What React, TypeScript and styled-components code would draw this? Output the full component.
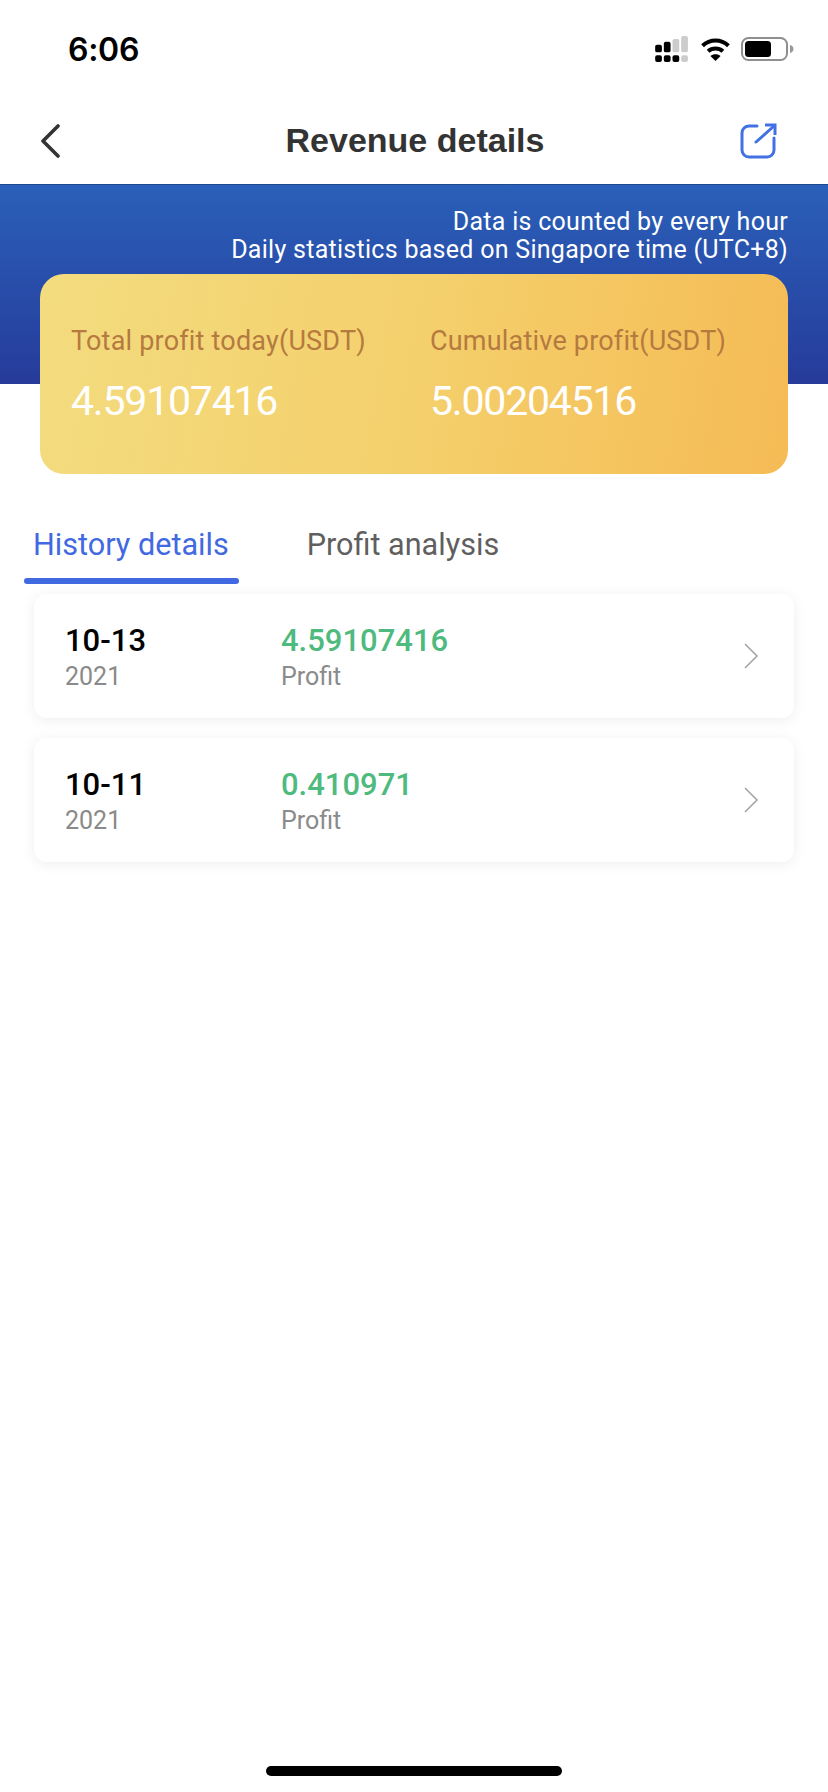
// App.tsx

import React, { FunctionComponent } from 'react';
import styled, { createGlobalStyle } from 'styled-components';

const GlobalStyle = createGlobalStyle`
  html, body {
    margin: 0;
    padding: 0;
    background: #fff;
  }
  * {
    box-sizing: border-box;
  }
`;

const Page = styled.div`
  position: relative;
  width: 828px;
  height: 1792px;
  overflow: hidden;
  background: #fff;
  font-family: Roboto, 'Liberation Sans', sans-serif;
`;

const StatusBar = styled.div`
  display: flex;
  align-items: center;
  justify-content: space-between;
  height: 100px;
  padding: 0 34px 2px 68px;
`;

const Clock = styled.span`
  font-family: Inter, sans-serif;
  font-size: 32px;
  font-weight: 600;
  letter-spacing: -0.3px;
  color: #000;
`;

const StatusIcons = styled.div`
  display: flex;
  align-items: center;
  gap: 10px;
`;

const NavBar = styled.div`
  display: grid;
  grid-template-columns: 1fr auto 1fr;
  align-items: center;
  height: 84px;
  padding: 0 51px 2px 40px;
`;

const NavAction = styled.div<{ end?: boolean }>`
  display: flex;
  justify-content: ${props => (props.end ? 'flex-end' : 'flex-start')};
`;

const NavTitle = styled.h1`
  margin: 0 0 2px 13px;
  font-family: 'Liberation Sans', sans-serif;
  font-size: 34px;
  font-weight: 700;
  color: #333;
`;

const Hero = styled.section`
  padding: 24px 40px 0;
  background: linear-gradient(180deg, #2a60b9 0%, #263b9a 100%) top / 100% 200px no-repeat;
  box-shadow: inset 0 1px 0 #1d4a8e;
`;

const HeroNote = styled.div`
  font-size: 25px;
  line-height: 28px;
  letter-spacing: 0.28px;
  color: #fff;
  text-align: right;
`;

const SummaryCard = styled.div`
  display: grid;
  grid-template-columns: 359px 1fr;
  height: 200px;
  margin-top: 10px;
  padding: 52px 31px 0;
  border-radius: 24px;
  background: linear-gradient(100deg, #f3dc7f 0%, #f4d06c 50%, #f5bb55 100%);
`;

const SummaryLabel = styled.div`
  font-size: 27px;
  line-height: 30px;
  letter-spacing: 0.2px;
  color: #b57a40;
  white-space: nowrap;
`;

const SummaryValue = styled.div`
  margin-top: 21px;
  font-size: 41px;
  line-height: 48px;
  letter-spacing: -1.2px;
  color: #fff;
`;

const Tabs = styled.div`
  display: flex;
  gap: 59px;
  margin: 50px 0 0 24px;
`;

const Tab = styled.div<{ active?: boolean }>`
  position: relative;
  padding: 0 10px 0 9px;
  height: 60px;
  font-size: 30.6px;
  line-height: 42px;
  color: ${props => (props.active ? '#4169e1' : '#5f5f5f')};

  &::after {
    content: '';
    display: ${props => (props.active ? 'block' : 'none')};
    position: absolute;
    left: 0;
    right: 0;
    bottom: 0;
    height: 6px;
    border-radius: 3px;
    background: #4169e1;
  }
`;

const HistoryList = styled.div`
  display: flex;
  flex-direction: column;
  gap: 20px;
  margin: 10px 34px 0;
`;

const HistoryRow = styled.div`
  display: grid;
  grid-template-columns: 216px 1fr 51px;
  align-items: center;
  height: 124px;
  padding-left: 31px;
  border-radius: 12px;
  background: #fff;
  box-shadow: 0 2px 14px rgba(0, 0, 0, 0.07);
`;

const RowCell = styled.div`
  padding-top: 3px;
`;

const RowMain = styled.div<{ tone: 'date' | 'profit' }>`
  font-size: 31px;
  line-height: 36px;
  font-weight: 500;
  color: ${props => (props.tone === 'profit' ? '#4fba7e' : '#000')};
`;

const RowSub = styled.div`
  margin-top: 3px;
  font-size: 25px;
  line-height: 30px;
  color: #8a8a8a;
`;

const HomeIndicator = styled.div`
  position: absolute;
  left: 266px;
  bottom: 16px;
  width: 296px;
  height: 10px;
  border-radius: 5px;
  background: #000;
`;

const SignalIcon = () => (
  <svg width="35" height="26" viewBox="0 0 36 27">
    <rect x="0" y="9" width="7" height="8" rx="2" fill="#000" />
    <rect x="9" y="6" width="7" height="11" rx="2" fill="#000" />
    <rect x="18" y="3" width="7" height="14" rx="2" fill="#ccc" />
    <rect x="27" y="0" width="7" height="17" rx="2" fill="#ccc" />
    <rect x="0" y="20" width="7" height="7" rx="2" fill="#000" />
    <rect x="9" y="20" width="7" height="7" rx="2" fill="#000" />
    <rect x="18" y="20" width="7" height="7" rx="2" fill="#000" />
    <rect x="27" y="20" width="7" height="7" rx="2" fill="#ccc" />
  </svg>
);

const WifiIcon = () => (
  <svg width="31" height="24" viewBox="0 0 32 26" fill="none" stroke="#000" strokeWidth="4.4">
    <path d="M2 9.5C10 2 22 2 30 9.5" />
    <path d="M8 15.5C12.5 11.5 19.5 11.5 24 15.5" />
    <path d="M16 26l-5.5-5.5C13.5 18 18.5 18 21.5 20.5z" fill="#000" stroke="none" />
  </svg>
);

const BatteryIcon = () => (
  <svg width="53" height="24" viewBox="0 0 53 24">
    <rect x="1" y="1" width="45" height="22" rx="6.5" fill="none" stroke="#8f8f8f" strokeWidth="2" />
    <rect x="4" y="4" width="26" height="16" rx="3.500" fill="#000" />
    <path d="M49 8c2 .6 3.500 2 3.500 4s-1.500 3.400-3.500 4z" fill="#999" />
  </svg>
);

const BackIcon = () => (
  <svg width="20" height="34" viewBox="0 0 20 34" fill="none">
    <path d="M18 2L3 17l15 15" stroke="#333" strokeWidth="3.600" strokeLinecap="round" strokeLinejoin="round" />
  </svg>
);

const ShareIcon = () => (
  <svg width="37" height="36" viewBox="0 0 37 36" fill="none" stroke="#4271e4" strokeWidth="3" strokeLinecap="round">
    <path d="M17 3H9a7 7 0 0 0-7 7v17a7 7 0 0 0 7 7h18a7 7 0 0 0 7-7V15" />
    <path d="M16 19L34 3" />
    <path d="M25 2h10v10" strokeLinecap="butt" />
  </svg>
);

const ChevronIcon = () => (
  <svg width="16" height="26" viewBox="0 0 16 26" fill="none">
    <path d="M2 1l12 12L2 25" stroke="#a6a6a6" strokeWidth="1.600" />
  </svg>
);

const history = [
  { date: '10-13', year: '2021', profit: '4.59107416' },
  { date: '10-11', year: '2021', profit: '0.410971' },
];

const App: FunctionComponent = () => {
  return (
    <Page>
      <GlobalStyle />
      <StatusBar>
        <Clock>6:06</Clock>
        <StatusIcons>
          <SignalIcon />
          <WifiIcon />
          <BatteryIcon />
        </StatusIcons>
      </StatusBar>
      <NavBar>
        <NavAction>
          <BackIcon />
        </NavAction>
        <NavTitle>Revenue details</NavTitle>
        <NavAction end>
          <ShareIcon />
        </NavAction>
      </NavBar>
      <Hero>
        <HeroNote>
          Data is counted by every hour
          <br />
          Daily statistics based on Singapore time (UTC+8)
        </HeroNote>
        <SummaryCard>
          <div>
            <SummaryLabel>Total profit today(USDT)</SummaryLabel>
            <SummaryValue>4.59107416</SummaryValue>
          </div>
          <div>
            <SummaryLabel>Cumulative profit(USDT)</SummaryLabel>
            <SummaryValue>5.00204516</SummaryValue>
          </div>
        </SummaryCard>
      </Hero>
      <Tabs>
        <Tab active>History details</Tab>
        <Tab>Profit analysis</Tab>
      </Tabs>
      <HistoryList>
        {history.map(item => (
          <HistoryRow key={item.date}>
            <RowCell>
              <RowMain tone="date">{item.date}</RowMain>
              <RowSub>{item.year}</RowSub>
            </RowCell>
            <RowCell>
              <RowMain tone="profit">{item.profit}</RowMain>
              <RowSub>Profit</RowSub>
            </RowCell>
            <ChevronIcon />
          </HistoryRow>
        ))}
      </HistoryList>
      <HomeIndicator />
    </Page>
  );
};

export default App;
